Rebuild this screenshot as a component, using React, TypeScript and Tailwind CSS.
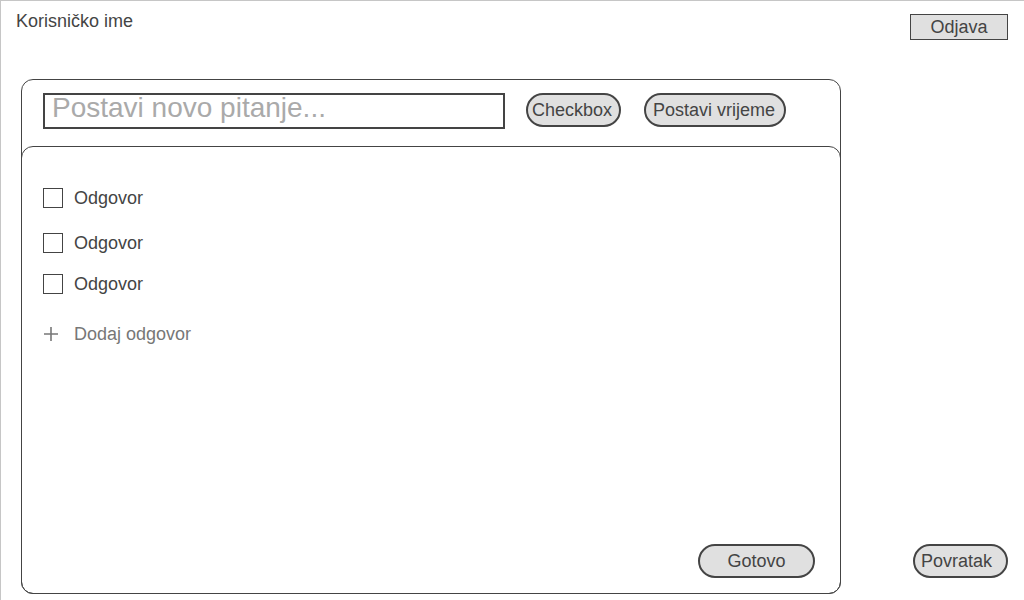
const answers = [
  { label: "Odgovor", mt: "mt-[41px]" },
  { label: "Odgovor", mt: "mt-[25px]" },
  { label: "Odgovor", mt: "mt-[21px]" },
];

function PlusIcon() {
  return (
    <svg width="16" height="16" viewBox="0 0 16 16" className="text-[#777]">
      <path d="M8 1v14M1 8h14" stroke="currentColor" strokeWidth="1.6" fill="none" />
    </svg>
  );
}

const pill =
  "h-[34px] rounded-full border-2 border-[#444] bg-[#e0e0e0] text-[18px] leading-none text-[#444]";

export default function App() {
  return (
    <div className="w-[1024px] h-[600px] flex flex-col overflow-hidden border-t border-l border-[#c6c6c6] bg-white font-['Liberation_Sans',Arial,sans-serif] text-[#444]">
      <header className="flex justify-between h-[78px] shrink-0 pl-[15px] pr-4">
        <div className="pt-[10px] text-[18px] leading-[21px]">Korisničko ime</div>
        <button className="mt-[13px] w-[98px] h-[26px] border border-[#444] bg-[#e0e0e0] text-[18px] leading-none text-[#444]">
          Odjava
        </button>
      </header>

      <div className="flex flex-1 pl-5">
        <section className="w-[820px] h-[515px] shrink-0 flex flex-col border border-[#444] rounded-xl">
          <div className="h-[66px] shrink-0 flex items-start pt-[13px] pl-[21px]">
            <input
              placeholder="Postavi novo pitanje..."
              className="w-[462px] h-[36px] border-2 border-[#444] px-[7px] pb-[6px] text-[28px] leading-none text-[#444] placeholder:text-[#aaa] outline-none"
            />
            <button className={`${pill} ml-[21px] w-[95px] text-left pl-[4px]`}>Checkbox</button>
            <button className={`${pill} ml-[23px] w-[142px] text-left pl-[7px]`}>Postavi vrijeme</button>
          </div>

          <div className="flex-1 -mx-px -mb-px flex flex-col border border-[#444] rounded-xl pl-[21px]">
            {answers.map((a, i) => (
              <label key={i} className={`${a.mt} flex items-center h-5 gap-[11px]`}>
                <span className="w-5 h-5 border border-[#444] bg-white" />
                <span className="text-[18px] leading-none">{a.label}</span>
              </label>
            ))}
            <div className="mt-[30px] flex items-center h-5 gap-[15px]">
              <PlusIcon />
              <span className="text-[18px] leading-none text-[#777]">Dodaj odgovor</span>
            </div>
            <button className={`${pill} mt-auto self-end mr-[25px] mb-[15px] w-[117px]`}>Gotovo</button>
          </div>
        </section>

        <div className="flex-1 flex items-end justify-end pr-4 pb-[22px]">
          <button className={`${pill} w-[95px] text-left pl-[6px]`}>Povratak</button>
        </div>
      </div>
    </div>
  );
}
